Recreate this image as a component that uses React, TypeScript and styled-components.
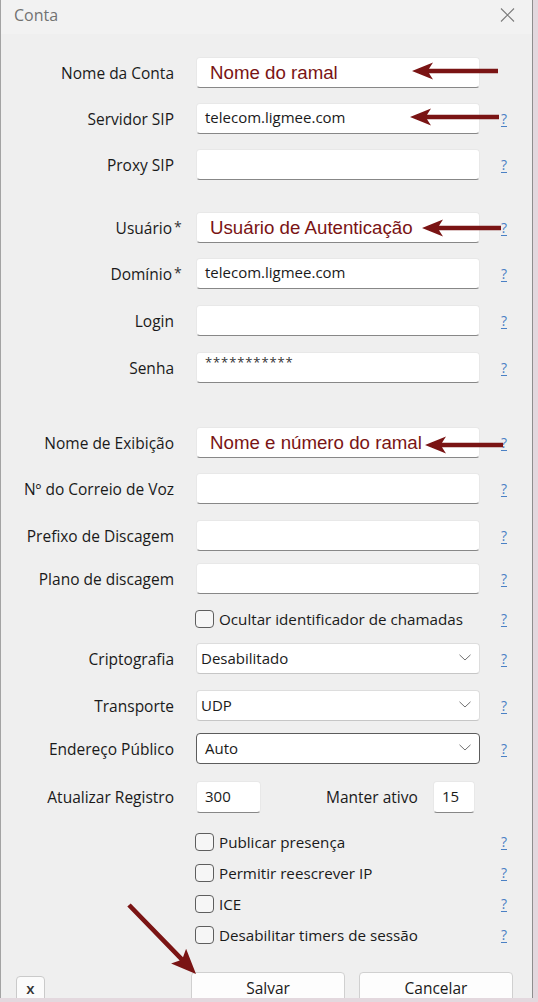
import React from 'react';
import styled, { createGlobalStyle } from 'styled-components';

const UI_FONT = `'Open Sans', 'Noto Sans', 'DejaVu Sans', sans-serif`;
const NOTE_FONT = `'Liberation Sans', Arial, sans-serif`;
const RED = '#7a1414';

const GlobalStyle = createGlobalStyle`
  html, body {
    margin: 0;
    padding: 0;
    background: #e3d8de;
  }
  body {
    width: 538px;
    height: 1002px;
    overflow: hidden;
    font-family: ${UI_FONT};
  }
`;

const Screen = styled.div`
  position: relative;
  width: 538px;
  height: 1002px;
`;

const Dialog = styled.div`
  width: 533px;
  height: 998px;
  box-sizing: border-box;
  background: #efefef;
  border-left: 1px solid #a3a3a3;
  border-right: 1px solid #8e8e8e;
  display: flex;
  flex-direction: column;
  overflow: hidden;
`;

const TitleBar = styled.div`
  flex: none;
  height: 34px;
  box-sizing: border-box;
  padding: 0 17px 4px 13px;
  display: flex;
  align-items: center;
  justify-content: space-between;
  background: #f2f2f2;
`;

const Title = styled.span`
  font-size: 16px;
  color: #727272;
`;

const Form = styled.div`
  display: flex;
  flex-direction: column;
  padding-top: 23px;
`;

const Row = styled.div<{ $gap: number; $h?: number }>`
  display: flex;
  align-items: center;
  height: ${p => p.$h ?? 31}px;
  margin-top: ${p => p.$gap}px;
`;

const Label = styled.div`
  flex: none;
  width: 173px;
  display: flex;
  justify-content: flex-end;
  font-size: 15.5px;
  color: #1a1a1a;
  white-space: nowrap;
`;

const Req = styled.span`
  display: inline-block;
  width: 0;
  margin-left: 2px;
  font-size: 14px;
  color: #333;
  white-space: nowrap;
`;

const Field = styled.div<{ $w?: number; $ml?: number }>`
  flex: none;
  width: ${p => p.$w ?? 284}px;
  height: 100%;
  margin-left: ${p => p.$ml ?? 22}px;
  box-sizing: border-box;
  padding: 0 8px 3px;
  display: flex;
  align-items: center;
  background: #fff;
  border: 1px solid #e8e8e8;
  border-bottom: 1.5px solid #878787;
  border-radius: 4px;
  font-size: 15px;
  color: #1a1a1a;
  white-space: nowrap;
`;

const Note = styled.span`
  margin: 3px 0 0 5px;
  font-family: ${NOTE_FONT};
  font-size: 18.7px;
  color: ${RED};
`;

const Secret = styled.span`
  margin-top: -9px;
  font-size: 13px;
  letter-spacing: 0.9px;
  color: #333;
`;

const Select = styled.div<{ $focus?: boolean }>`
  flex: none;
  width: 284px;
  height: 100%;
  margin-left: 22px;
  box-sizing: border-box;
  padding: 0 8px 2px ${p => (p.$focus ? 8 : 4)}px;
  display: flex;
  align-items: center;
  justify-content: space-between;
  background: #fff;
  border: 1px solid ${p => (p.$focus ? '#5c5c5c' : '#dddddd')};
  border-bottom-color: ${p => (p.$focus ? '#5c5c5c' : '#c6c6c6')};
  border-radius: 4px;
  font-size: 15px;
  color: #1a1a1a;
`;

const Help = styled.span`
  flex: none;
  width: 16px;
  margin-left: 16px;
  text-align: center;
  font-size: 14px;
  color: #4a80c4;
  text-decoration: underline;
  text-underline-offset: 2px;
`;

const CheckItem = styled.div`
  flex: none;
  width: 285px;
  margin-left: 194px;
  display: flex;
  align-items: center;
  gap: 5px;
  font-size: 15.2px;
  color: #1a1a1a;
  white-space: nowrap;
`;

const Box = styled.span`
  flex: none;
  width: 19px;
  height: 18px;
  box-sizing: border-box;
  border: 1px solid #5e5e5e;
  border-radius: 4px;
  background: #f6f6f6;
`;

const InlineLabel = styled.span`
  flex: none;
  width: 107px;
  margin-left: 65px;
  font-size: 15.5px;
  color: #1a1a1a;
`;

const Footer = styled.div`
  display: flex;
  align-items: flex-start;
  margin-top: 22px;
  padding-left: 15px;
`;

const SmallButton = styled.div`
  width: 29px;
  height: 32px;
  margin-top: 4px;
  box-sizing: border-box;
  padding-top: 1px;
  border: 1px solid #cacaca;
  border-radius: 4px;
  background: #fbfbfb;
  text-align: center;
  font-size: 15px;
  font-weight: 600;
  color: #333;
`;

const Button = styled.div<{ $ml: number }>`
  width: 154px;
  height: 34px;
  margin-left: ${p => p.$ml}px;
  box-sizing: border-box;
  padding-top: 4px;
  border: 1px solid #d0d0d0;
  border-radius: 4px;
  background: #fdfdfd;
  text-align: center;
  font-size: 15.5px;
  color: #1a1a1a;
`;

const Overlay = styled.svg`
  position: absolute;
  top: 0;
  left: 0;
  pointer-events: none;
`;

const CloseIcon = () => (
  <svg width="15" height="14" viewBox="0 0 15 14">
    <path d="M1 0.5 L14 13.5 M14 0.5 L1 13.5" stroke="#7a7a7a" strokeWidth="1.1" fill="none" />
  </svg>
);

const Chevron = () => (
  <svg width="12" height="7" viewBox="0 0 12 7">
    <path d="M0.5 0.8 L6 6 L11.5 0.8" stroke="#707070" strokeWidth="1" fill="none" />
  </svg>
);

type Arrow = { from: [number, number]; to: [number, number]; head?: number; half?: number };

const ARROWS: Arrow[] = [
  { from: [498, 71], to: [412, 71] },
  { from: [499, 117], to: [410, 117] },
  { from: [501, 228], to: [422, 228] },
  { from: [503, 445], to: [425, 445] },
  { from: [129, 905], to: [196, 974], head: 25, half: 10.5 },
];

// outline of a filled arrow from tail to tip
function arrowPoints({ from, to, head = 21, half = 8.5 }: Arrow) {
  const [x1, y1] = from;
  const [x2, y2] = to;
  const len = Math.hypot(x2 - x1, y2 - y1);
  const ux = (x2 - x1) / len;
  const uy = (y2 - y1) / len;
  const nx = -uy;
  const ny = ux;
  const shaft = 2.3;
  const bx = x2 - ux * head;
  const by = y2 - uy * head;
  const kx = x2 - ux * (head - 4);
  const ky = y2 - uy * (head - 4);
  const pts = [
    [x1 + nx * shaft, y1 + ny * shaft],
    [kx + nx * shaft, ky + ny * shaft],
    [bx + nx * half, by + ny * half],
    [x2, y2],
    [bx - nx * half, by - ny * half],
    [kx - nx * shaft, ky - ny * shaft],
    [x1 - nx * shaft, y1 - ny * shaft],
  ];
  return pts.map(p => p.map(v => v.toFixed(1)).join(',')).join(' ');
}

type Line =
  | { kind: 'text'; label: string; req?: boolean; value?: string; secret?: boolean; note?: string; gap: number; help?: boolean }
  | { kind: 'check'; label: string; gap: number }
  | { kind: 'select'; label: string; value: string; gap: number; focus?: boolean };

const LINES: Line[] = [
  { kind: 'text', label: 'Nome da Conta', note: 'Nome do ramal', gap: 0, help: false },
  { kind: 'text', label: 'Servidor SIP', value: 'telecom.ligmee.com', gap: 15 },
  { kind: 'text', label: 'Proxy SIP', gap: 15 },
  { kind: 'text', label: 'Usuário', req: true, note: 'Usuário de Autenticação', gap: 32 },
  { kind: 'text', label: 'Domínio', req: true, value: 'telecom.ligmee.com', gap: 15 },
  { kind: 'text', label: 'Login', gap: 16 },
  { kind: 'text', label: 'Senha', value: '***********', secret: true, gap: 16 },
  { kind: 'text', label: 'Nome de Exibição', note: 'Nome e número do ramal', gap: 44 },
  { kind: 'text', label: 'Nº do Correio de Voz', gap: 15 },
  { kind: 'text', label: 'Prefixo de Discagem', gap: 16 },
  { kind: 'text', label: 'Plano de discagem', gap: 12 },
  { kind: 'check', label: 'Ocultar identificador de chamadas', gap: 9 },
  { kind: 'select', label: 'Criptografia', value: 'Desabilitado', gap: 9 },
  { kind: 'select', label: 'Transporte', value: 'UDP', gap: 16 },
  { kind: 'select', label: 'Endereço Público', value: 'Auto', gap: 12, focus: true },
];

const EXTRA_CHECKS = ['Publicar presença', 'Permitir reescrever IP', 'ICE', 'Desabilitar timers de sessão'];

function renderLine(line: Line, i: number) {
  if (line.kind === 'check') {
    return (
      <Row key={i} $gap={line.gap}>
        <CheckItem>
          <Box />
          {line.label}
        </CheckItem>
        <Help>?</Help>
      </Row>
    );
  }
  if (line.kind === 'select') {
    return (
      <Row key={i} $gap={line.gap}>
        <Label>{line.label}</Label>
        <Select $focus={line.focus}>
          {line.value}
          <Chevron />
        </Select>
        <Help>?</Help>
      </Row>
    );
  }
  let content: React.ReactNode = line.value;
  if (line.note) content = <Note>{line.note}</Note>;
  else if (line.secret) content = <Secret>{line.value}</Secret>;
  return (
    <Row key={i} $gap={line.gap}>
      <Label>
        {line.label}
        {line.req && <Req>*</Req>}
      </Label>
      <Field>{content}</Field>
      {line.help !== false && <Help>?</Help>}
    </Row>
  );
}

export default function App() {
  return (
    <Screen>
      <GlobalStyle />
      <Dialog>
        <TitleBar>
          <Title>Conta</Title>
          <CloseIcon />
        </TitleBar>
        <Form>
          {LINES.map(renderLine)}
          <Row $gap={17} $h={32}>
            <Label>Atualizar Registro</Label>
            <Field $w={65}>300</Field>
            <InlineLabel>Manter ativo</InlineLabel>
            <Field $w={42} $ml={0}>15</Field>
          </Row>
          {EXTRA_CHECKS.map((c, i) => (
            <Row key={c} $gap={i === 0 ? 13 : 0}>
              <CheckItem>
                <Box />
                {c}
              </CheckItem>
              <Help>?</Help>
            </Row>
          ))}
        </Form>
        <Footer>
          <SmallButton>x</SmallButton>
          <Button $ml={146}>Salvar</Button>
          <Button $ml={14}>Cancelar</Button>
        </Footer>
      </Dialog>
      <Overlay width="538" height="1002" viewBox="0 0 538 1002">
        {ARROWS.map((a, i) => (
          <polygon key={i} points={arrowPoints(a)} fill={RED} />
        ))}
      </Overlay>
    </Screen>
  );
}
